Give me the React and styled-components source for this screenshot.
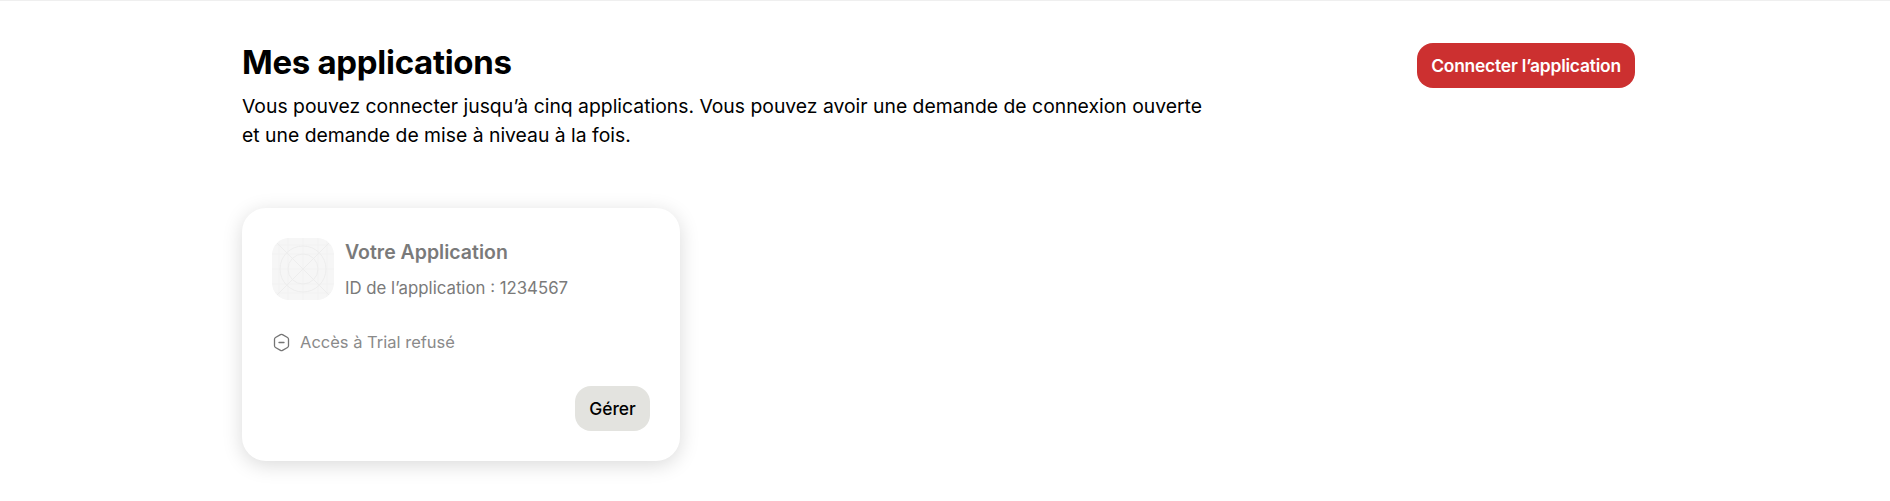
import React from "react";
import styled, { createGlobalStyle } from "styled-components";

const GlobalStyle = createGlobalStyle`
    html, body {
        margin: 0;
        padding: 0;
        background: #fff;
        font-family: "Inter", "Liberation Sans", sans-serif;
        color: #000;
    }
    * {
        box-sizing: border-box;
    }
`

const Page = styled.div`
    height: 501px;
    border-top: 1px solid #efefef;
    padding: 42px 255px 0 242px;
`

const Header = styled.div`
    display: flex;
    justify-content: space-between;
    align-items: flex-start;
`

const HeaderText = styled.div`
    width: 970px;
`

const Title = styled.h1`
    margin: 0;
    font-size: 33px;
    line-height: 38px;
    font-weight: 700;
    letter-spacing: -0.3px;
`

const Intro = styled.p`
    margin: 11px 0 0;
    font-size: 19.35px;
    line-height: 29px;
    font-weight: 400;
`

const PrimaryButton = styled.button`
    height: 45px;
    width: 218px;
    padding: 0;
    border: none;
    border-radius: 16px;
    background: #cc3030;
    color: #fff;
    font-family: inherit;
    font-size: 17.4px;
    font-weight: 600;
    letter-spacing: -0.2px;
    cursor: pointer;
`

const Card = styled.div`
    display: flex;
    flex-direction: column;
    width: 438px;
    height: 253px;
    margin-top: 58px;
    padding: 30px;
    border-radius: 24px;
    background: #fff;
    box-shadow: 0 4px 20px rgba(0, 0, 0, 0.15);
`

const AppRow = styled.div`
    display: flex;
    gap: 11px;
`

const AppInfo = styled.div`
    display: flex;
    flex-direction: column;
`

const AppName = styled.div`
    font-size: 19.5px;
    line-height: 28px;
    font-weight: 600;
    color: #7a7a7a;
`

const AppId = styled.div`
    margin-top: 10px;
    font-size: 16.8px;
    line-height: 24px;
    color: #7a7a7a;
`

const Status = styled.div`
    display: flex;
    align-items: center;
    gap: 9px;
    margin-top: 30px;
    font-size: 16.5px;
    line-height: 24px;
    color: #8a8a8a;
`

const Actions = styled.div`
    display: flex;
    justify-content: flex-end;
    margin-top: auto;
`

const SecondaryButton = styled.button`
    height: 45px;
    width: 75px;
    padding: 0;
    border: none;
    border-radius: 16px;
    background: #e3e3df;
    color: #000;
    font-family: inherit;
    font-size: 17.4px;
    font-weight: 500;
    cursor: pointer;
`

const AppIcon = () => (
    <svg width="62" height="62" viewBox="0 0 62 62" fill="none">
        <clipPath id="app-icon-shape">
            <rect width="62" height="62" rx="17" />
        </clipPath>
        <g clipPath="url(#app-icon-shape)">
            <rect width="62" height="62" fill="#f6f6f6" />
            <path stroke="#f2f2f2" d="M31 0V62M0 31H62M7 0V62M55 0V62M0 7H62M0 55H62M16 0V62M46 0V62M0 16H62M0 46H62" />
            <g stroke="#ededed">
                <path d="M0 0L62 62M62 0L0 62" />
                <circle cx="31" cy="31" r="23" />
                <circle cx="31" cy="31" r="15" />
            </g>
        </g>
    </svg>
)

const RefusedIcon = () => (
    <svg width="19" height="19" viewBox="0 0 19 19" fill="none" stroke="#757575" strokeWidth="1.3">
        <path d="M8.500 1.600a2 2 0 0 1 2 0l5 2.900a2 2 0 0 1 1 1.700v6.600a2 2 0 0 1-1 1.700l-5 2.900a2 2 0 0 1-2 0l-5-2.900a2 2 0 0 1-1-1.700V6.200a2 2 0 0 1 1-1.700z" />
        <path d="M7 9.500H12" strokeLinecap="round" />
    </svg>
)

const App = () => {
    return(
        <Page>
            <GlobalStyle />
            <Header>
                <HeaderText>
                    <Title>Mes applications</Title>
                    <Intro>
                        Vous pouvez connecter jusqu’à cinq applications. Vous pouvez avoir une demande de connexion ouverte et une demande de mise à niveau à la fois.
                    </Intro>
                </HeaderText>
                <PrimaryButton>Connecter l’application</PrimaryButton>
            </Header>
            <Card>
                <AppRow>
                    <AppIcon />
                    <AppInfo>
                        <AppName>Votre Application</AppName>
                        <AppId>ID de l’application : 1234567</AppId>
                    </AppInfo>
                </AppRow>
                <Status>
                    <RefusedIcon />
                    Accès à Trial refusé
                </Status>
                <Actions>
                    <SecondaryButton>Gérer</SecondaryButton>
                </Actions>
            </Card>
        </Page>
    )
}

export default App
